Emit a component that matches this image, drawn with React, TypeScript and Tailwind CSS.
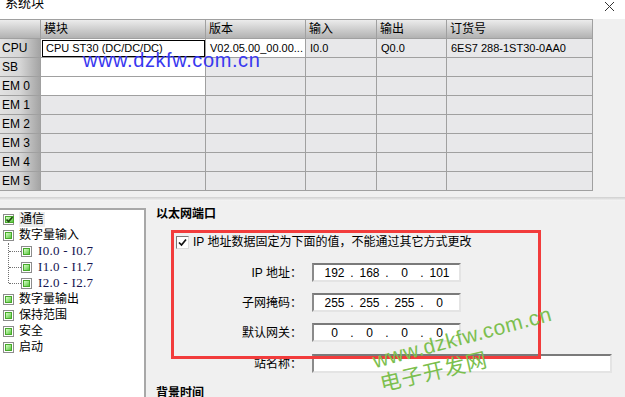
import React from 'react';

const FONT = '"Liberation Sans", "Noto Sans CJK SC", sans-serif';

const columns = ['模块', '版本', '输入', '输出', '订货号'];
const rowLabels = ['CPU', 'SB', 'EM 0', 'EM 1', 'EM 2', 'EM 3', 'EM 4', 'EM 5'];

type Cell = { text?: string; white?: boolean; focus?: boolean };

const rows: Cell[][] = rowLabels.map((label, i) => {
  if (i === 0) {
    return [
      { text: 'CPU ST30 (DC/DC/DC)', white: true, focus: true },
      { text: 'V02.05.00_00.00...', white: true },
      { text: 'I0.0' },
      { text: 'Q0.0' },
      { text: '6ES7 288-1ST30-0AA0' },
    ];
  }
  return [{ white: i <= 2 }, {}, {}, {}, {}];
});

function TreeIcon({ checked }: { checked?: boolean }) {
  return (
    <span className="w-[11px] h-[11px] border border-[#8c8c8c] bg-white p-[1px] flex shrink-0">
      <span className="flex-1 border border-[#48a82c] bg-gradient-to-br from-[#d6ffc6] to-[#58c83c] flex items-center justify-center">
        {checked && (
          <svg width="7" height="7" viewBox="0 0 7 7">
            <path d="M0.5 3.5 L2.6 5.6 L6.5 1" stroke="#1f4a10" strokeWidth="1.6" fill="none" />
          </svg>
        )}
      </span>
    </span>
  );
}

function IpBox({ parts }: { parts: string[] }) {
  return (
    <div className="w-[149px] h-[19px] bg-white border-2 border-t-[#7a7a7a] border-l-[#8a8a8a] border-r-[#e4e4e4] border-b-[#e4e4e4] flex items-center pl-[5px] text-[12px] text-black">
      {parts.map((p, i) => (
        <React.Fragment key={i}>
          {i > 0 && <span className="w-[4px] text-center">.</span>}
          <span className="w-[31px] text-center">{p}</span>
        </React.Fragment>
      ))}
    </div>
  );
}

export default function App() {
  return (
    <div className="relative w-[625px] h-[397px] overflow-hidden bg-[#f0f0f0] text-black" style={{ fontFamily: FONT }}>
      {/* 标题栏 */}
      <div className="h-[19px] bg-white flex items-start justify-between overflow-hidden">
        <span className="text-[13px] leading-[13px] ml-[5px] -mt-[4px]">系统块</span>
        <svg width="11" height="11" viewBox="0 0 11 11" className="mr-[10px] mt-[1px]">
          <path d="M1 1 L10 10 M10 1 L1 10" stroke="#333" strokeWidth="1" />
        </svg>
      </div>

      {/* 模块表格 */}
      <div className="flex">
        <div className="grid grid-cols-[41px_165px_100px_71px_70px_146px] border-t border-[#a0a0a0] text-[11px]">
          <div className="h-[19px] border-r border-b border-[#a0a0a0] bg-gradient-to-b from-[#ececec] to-[#b2b2b2]" />
          {columns.map(c => (
            <div key={c} className="h-[19px] border-r border-b border-[#a0a0a0] bg-gradient-to-b from-[#ececec] to-[#b2b2b2] pl-[3px] flex items-center text-[12px]">
              {c}
            </div>
          ))}
          {rows.map((r, i) => (
            <React.Fragment key={i}>
              <div className="h-[19px] border-r border-b border-[#a0a0a0] bg-gradient-to-r from-[#e2e2e2] via-[#d6d6d6] to-[#a4a4a4] pl-[2px] flex items-center text-[12px]">
                {rowLabels[i]}
              </div>
              {r.map((cell, j) => (
                <div
                  key={j}
                  className={`h-[19px] border-r border-b border-[#a0a0a0] flex items-center whitespace-nowrap overflow-hidden ${
                    cell.white ? 'bg-white' : 'bg-[#e8e8ea]'
                  } ${cell.focus ? 'outline outline-1 -outline-offset-2 outline-black pl-[5px]' : 'pl-[4px]'}`}
                >
                  {cell.text}
                </div>
              ))}
            </React.Fragment>
          ))}
        </div>
      </div>

      {/* 分隔条 */}
      <div className="h-[6px]" />
      <div className="h-[4px] bg-gradient-to-b from-[#cfcfcf] to-[#f7f7f7]" />

      {/* 下部 */}
      <div className="flex h-[197px]">
        {/* 左侧树 */}
        <div className="w-[146px] mt-[7px] bg-white border-t-2 border-r-2 border-t-[#a8a8a8] border-r-[#a8a8a8] pt-[1px] text-[12px]">
          <div className="h-[16px] flex items-center gap-[5px] pl-[3px]">
            <TreeIcon checked />
            <span className="bg-[#ececec] px-[1px] leading-[15px]">通信</span>
          </div>
          <div className="h-[16px] flex items-center gap-[5px] pl-[3px]">
            <TreeIcon />
            <span>数字量输入</span>
          </div>
          <div className="relative">
            <div className="absolute left-[8px] top-0 h-[40px] border-l border-dotted border-[#707070]" />
            {['I0.0 - I0.7', 'I1.0 - I1.7', 'I2.0 - I2.7'].map(t => (
              <div key={t} className="h-[16px] flex items-center pl-[9px]">
                <span className="w-[12px] border-t border-dotted border-[#707070]" />
                <TreeIcon />
                <span className="ml-[6px] text-[#141450] text-[13px] tracking-[0.3px]" style={{ fontFamily: '"Liberation Serif", serif' }}>
                  {t}
                </span>
              </div>
            ))}
          </div>
          {['数字量输出', '保持范围', '安全', '启动'].map(t => (
            <div key={t} className="h-[16px] flex items-center gap-[5px] pl-[3px]">
              <TreeIcon />
              <span>{t}</span>
            </div>
          ))}
        </div>

        {/* 右侧设置 */}
        <div className="flex-1 pl-[10px] pt-[6px] text-[12px]">
          <div className="font-bold h-[15px] leading-[15px]">以太网端口</div>
          <div className="mt-[13px] ml-[20px] h-[14px] flex items-center gap-[4px]">
            <span className="w-[13px] h-[13px] bg-white border border-t-[#7a7a7a] border-l-[#7a7a7a] border-r-[#dcdcdc] border-b-[#dcdcdc] flex items-center justify-center">
              <svg width="9" height="9" viewBox="0 0 9 9">
                <path d="M1 4.5 L3.5 7 L8 1.5" stroke="#111" strokeWidth="1.7" fill="none" />
              </svg>
            </span>
            <span>IP 地址数据固定为下面的值，不能通过其它方式更改</span>
          </div>

          <div className="mt-[14px] flex flex-col gap-[11px]">
            {[
              { label: 'IP 地址：', parts: ['192', '168', '0', '101'] },
              { label: '子网掩码：', parts: ['255', '255', '255', '0'] },
              { label: '默认网关：', parts: ['0', '0', '0', '0'] },
            ].map(f => (
              <div key={f.label} className="flex items-center h-[19px]">
                <span className="w-[146px] text-right">{f.label}</span>
                <span className="w-[10px]" />
                <IpBox parts={f.parts} />
              </div>
            ))}
            <div className="flex items-center h-[19px] mt-[1px]">
              <span className="w-[146px] text-right">站名称：</span>
              <span className="w-[10px]" />
              <div className="w-[300px] h-[19px] bg-white border-2 border-t-[#7a7a7a] border-l-[#8a8a8a] border-r-[#e4e4e4] border-b-[#e4e4e4]" />
            </div>
          </div>

          <div className="mt-[13px] font-bold leading-[15px]">背景时间</div>
        </div>
      </div>

      {/* 红色标注框 */}
      <div className="absolute left-[171px] top-[230px] w-[370px] h-[129px] border-[3px] border-[#f23c3c] pointer-events-none" />

      {/* 水印 */}
      <div className="absolute left-[83px] top-[49px] text-[20px] leading-[22px] tracking-[0.6px] text-[#3838f0]">
        www.dzkfw.com.cn
      </div>
      <div className="absolute left-[376px] top-[350px] origin-bottom-left -rotate-[15deg] text-[21px] leading-[22px] tracking-[0.5px] text-[#7cbf4f]">
        www.dzkfw.com.cn
      </div>
      <div className="absolute left-[383px] top-[372px] origin-bottom-left -rotate-[13deg] text-[21px] leading-[24px] tracking-[1px] text-[#7cbf4f]">
        电子开发网
      </div>
    </div>
  );
}
